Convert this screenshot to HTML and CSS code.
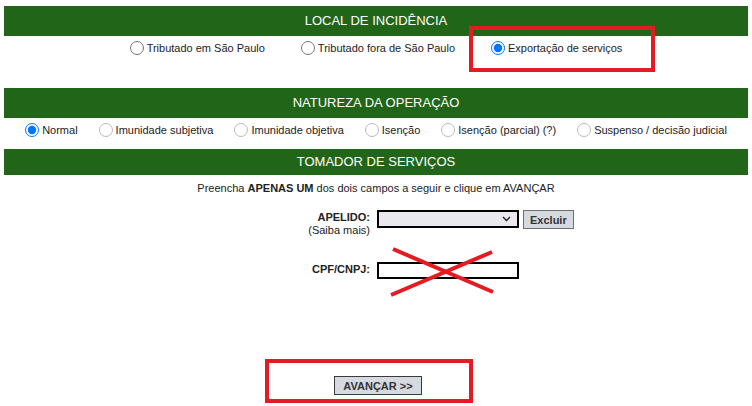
FILE: index.html
```html
<!DOCTYPE html>
<html>
  <head>
    <title>Emissão de NFS-e</title>
    <link rel="stylesheet" href="styles.css">
  </head>
  <body>
    <div class="section-head">LOCAL DE INCIDÊNCIA</div>
    <div class="options options-local">
      <label class="opt"><input type="radio" name="local"> Tributado em São Paulo</label>
      <label class="opt"><input type="radio" name="local"> Tributado fora de São Paulo</label>
      <label class="opt"><input type="radio" name="local" checked> Exportação de serviços</label>
    </div>

    <div class="section-head">NATUREZA DA OPERAÇÃO</div>
    <div class="options options-natureza">
      <label class="opt"><input type="radio" name="nat" checked> Normal</label>
      <label class="opt"><input class="faded" type="radio" name="nat"> Imunidade subjetiva</label>
      <label class="opt"><input class="faded" type="radio" name="nat"> Imunidade objetiva</label>
      <label class="opt"><input class="faded" type="radio" name="nat"> Isenção</label>
      <label class="opt"><input class="faded" type="radio" name="nat"> Isenção (parcial) (?)</label>
      <label class="opt"><input class="faded" type="radio" name="nat"> Suspenso / decisão judicial</label>
    </div>

    <div class="section-head short">TOMADOR DE SERVIÇOS</div>
    <p class="hint">Preencha <strong>APENAS UM</strong> dos dois campos a seguir e clique em AVANÇAR</p>

    <div class="field">
      <div class="field-label">
        <strong>APELIDO:</strong><br>
        (Saiba mais)
      </div>
      <div class="select-box">
        <svg width="9" height="6" viewBox="0 0 9 6"><path d="M1 1 L4.5 4.5 L8 1" fill="none" stroke="#222" stroke-width="1.4"/></svg>
      </div>
      <button class="btn">Excluir</button>
    </div>

    <div class="field field-cpf">
      <div class="field-label"><strong>CPF/CNPJ:</strong></div>
      <input class="text-box" type="text">
    </div>

    <div class="actions">
      <button class="btn btn-next">AVANÇAR &gt;&gt;</button>
    </div>

    <!-- marcações em vermelho -->
    <div class="mark mark-export"></div>
    <div class="mark mark-next"></div>
    <svg class="cross" width="110" height="52" viewBox="0 0 110 52">
      <line x1="5" y1="3" x2="105" y2="46" stroke="#e41b22" stroke-width="4"/>
      <line x1="3" y1="49" x2="104" y2="6" stroke="#e41b22" stroke-width="4"/>
    </svg>
  </body>
</html>
```

FILE: styles.css
```css
body {
  font-family: "Liberation Sans", Arial, sans-serif;
  font-size: 11px;
  color: #222;
  margin: 0;
  padding: 6px 4px 0;
  position: relative;
  height: 406px;
  box-sizing: border-box;
  overflow: hidden;
  background-color: #fff;
}
.section-head {
  background-color: #216618;
  color: #fff;
  text-align: center;
  font-size: 13px;
  height: 30px;
  line-height: 30px;
}
.section-head.short {
  height: 26px;
  line-height: 26px;
}
.options {
  display: flex;
  justify-content: center;
  align-items: flex-start;
  box-sizing: border-box;
  padding-top: 5px;
}
.options-local {
  height: 52px;
  gap: 36px;
}
.options-natureza {
  height: 31px;
  gap: 21px;
}
.opt {
  display: flex;
  align-items: center;
  gap: 3px;
  height: 14px;
}
.opt input {
  margin: 0;
  width: 14px;
  height: 14px;
}
.opt input.faded {
  opacity: 0.5;
}
.hint {
  text-align: center;
  margin: 7px 0 0;
  line-height: 13px;
}
.field {
  display: flex;
  align-items: flex-start;
  gap: 7px;
  margin-top: 15px;
}
.field-label {
  width: 366px;
  text-align: right;
  line-height: 13px;
  padding-top: 1px;
}
.field-cpf {
  margin-top: 25px;
}
.select-box {
  width: 142px;
  height: 18px;
  box-sizing: border-box;
  border: 2px solid #000;
  background-color: #e9e9ed;
  display: flex;
  align-items: center;
  justify-content: flex-end;
  padding-right: 6px;
}
.btn {
  font-family: "Liberation Sans", Arial, sans-serif;
  font-size: 11px;
  font-weight: bold;
  color: #333;
  background-color: #d6dae0;
  border: 1px solid #6f6f6f;
  height: 19px;
  padding: 0 6px;
  margin: 0 0 0 -3px;
}
.text-box {
  width: 142px;
  height: 17px;
  box-sizing: border-box;
  border: 2px solid #000;
  margin: 0;
  padding: 0;
}
.actions {
  display: flex;
  justify-content: center;
  margin-top: 97px;
  padding-left: 4px;
}
.btn-next {
  margin: 0;
  width: 88px;
  border-color: #3a3a3a;
}
.mark {
  position: absolute;
  border: 4px solid #e41b22;
  box-sizing: border-box;
}
.mark-export {
  left: 469px;
  top: 26px;
  width: 186px;
  height: 46px;
}
.mark-next {
  left: 265px;
  top: 359px;
  width: 208px;
  height: 44px;
}
.cross {
  position: absolute;
  left: 388px;
  top: 246px;
}
```
